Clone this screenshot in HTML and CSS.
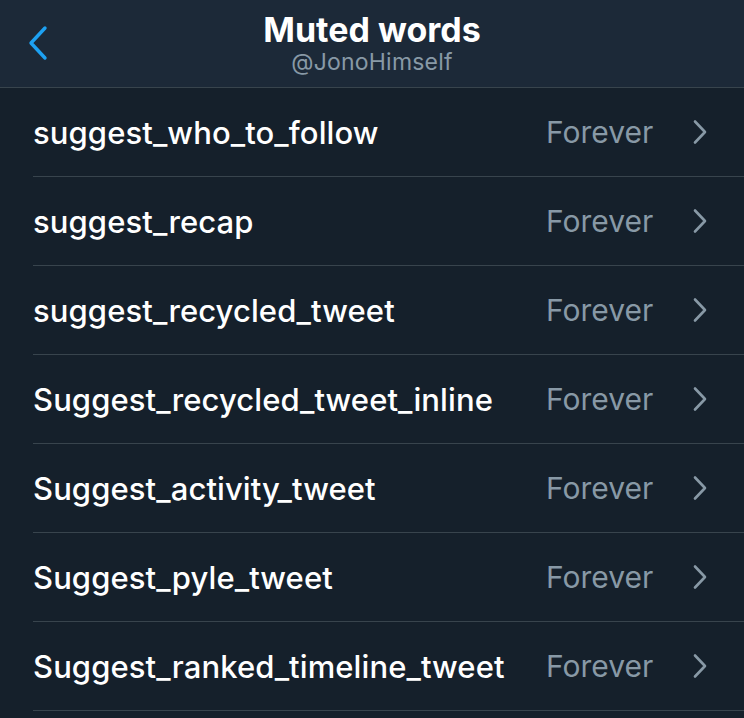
FILE: index.html
```html
<!DOCTYPE html>
<html>
<head>
<meta charset="utf-8">
<link rel="stylesheet" href="styles.css">
</head>
<body>
<header class="nav">
  <div class="back">
    <svg width="22" height="36" viewBox="0 0 22 36"><path d="M18 3 L4 18 L18 33" fill="none" stroke="#1da1f2" stroke-width="3.4" stroke-linecap="round" stroke-linejoin="round"/></svg>
  </div>
  <div class="titles">
    <div class="title">Muted words</div>
    <div class="handle">@JonoHimself</div>
  </div>
</header>
<ul class="list">
  <li class="row"><span class="word">suggest_who_to_follow</span><span class="dur">Forever</span><span class="chev"><svg width="16" height="28" viewBox="0 0 16 28"><path d="M3 3.5 L13 14 L3 24.5" fill="none" stroke="#8899a6" stroke-width="2.6" stroke-linecap="round" stroke-linejoin="round"/></svg></span></li>
  <li class="row"><span class="word">suggest_recap</span><span class="dur">Forever</span><span class="chev"><svg width="16" height="28" viewBox="0 0 16 28"><path d="M3 3.5 L13 14 L3 24.5" fill="none" stroke="#8899a6" stroke-width="2.6" stroke-linecap="round" stroke-linejoin="round"/></svg></span></li>
  <li class="row"><span class="word">suggest_recycled_tweet</span><span class="dur">Forever</span><span class="chev"><svg width="16" height="28" viewBox="0 0 16 28"><path d="M3 3.5 L13 14 L3 24.5" fill="none" stroke="#8899a6" stroke-width="2.6" stroke-linecap="round" stroke-linejoin="round"/></svg></span></li>
  <li class="row"><span class="word">Suggest_recycled_tweet_inline</span><span class="dur">Forever</span><span class="chev"><svg width="16" height="28" viewBox="0 0 16 28"><path d="M3 3.5 L13 14 L3 24.5" fill="none" stroke="#8899a6" stroke-width="2.6" stroke-linecap="round" stroke-linejoin="round"/></svg></span></li>
  <li class="row"><span class="word">Suggest_activity_tweet</span><span class="dur">Forever</span><span class="chev"><svg width="16" height="28" viewBox="0 0 16 28"><path d="M3 3.5 L13 14 L3 24.5" fill="none" stroke="#8899a6" stroke-width="2.6" stroke-linecap="round" stroke-linejoin="round"/></svg></span></li>
  <li class="row"><span class="word">Suggest_pyle_tweet</span><span class="dur">Forever</span><span class="chev"><svg width="16" height="28" viewBox="0 0 16 28"><path d="M3 3.5 L13 14 L3 24.5" fill="none" stroke="#8899a6" stroke-width="2.6" stroke-linecap="round" stroke-linejoin="round"/></svg></span></li>
  <li class="row"><span class="word">Suggest_ranked_timeline_tweet</span><span class="dur">Forever</span><span class="chev"><svg width="16" height="28" viewBox="0 0 16 28"><path d="M3 3.5 L13 14 L3 24.5" fill="none" stroke="#8899a6" stroke-width="2.6" stroke-linecap="round" stroke-linejoin="round"/></svg></span></li>
</ul>
</body>
</html>
```
FILE: styles.css
```css
html, body {
  margin: 0;
  padding: 0;
  background: #15202b;
  font-family: Inter, "Noto Sans", sans-serif;
  width: 744px;
  height: 718px;
  overflow: hidden;
}
.nav {
  height: 87px;
  background: #1c2938;
  border-bottom: 1px solid #38444d;
  display: flex;
  align-items: center;
  justify-content: center;
  position: relative;
}
.back {
  position: absolute;
  left: 27px;
  top: 25px;
  width: 22px;
  height: 36px;
}
.titles {
  display: flex;
  flex-direction: column;
  align-items: center;
  margin-top: -1px;
}
.title {
  color: #ffffff;
  font-size: 34px;
  font-weight: 700;
  line-height: 38px;
  letter-spacing: 0;
}
.handle {
  color: #8899a6;
  font-size: 23px;
  line-height: 27px;
  letter-spacing: 0.2px;
}
.list {
  list-style: none;
  margin: 0;
  padding: 0 0 0 33px;
}
.row {
  height: 88px;
  border-bottom: 1px solid #38444d;
  display: flex;
  align-items: center;
}
.word {
  flex: 1;
  color: #ffffff;
  font-size: 31px;
  font-weight: 500;
  letter-spacing: 0.1px;
}
.dur {
  color: #8899a6;
  font-size: 30px;
  font-weight: 400;
  width: 108px;
}
.chev {
  width: 16px;
  height: 28px;
  margin-left: 38px;
  margin-right: 36px;
  display: flex;
}
```
